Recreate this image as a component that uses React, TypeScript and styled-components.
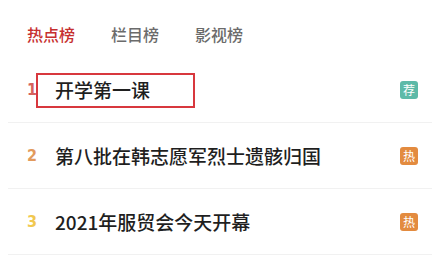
import React from "react";
import styled, { createGlobalStyle } from "styled-components";

const Global = createGlobalStyle`
  html, body { margin: 0; padding: 0; background: #ffffff; }
  body { font-family: "Noto Sans CJK SC", "Noto Sans", sans-serif; }
`;

const Page = styled.div`
  width: 447px;
  height: 260px;
  background: #fff;
  overflow: hidden;
`;

const Tabs = styled.div`
  display: flex;
  gap: 36px;
  height: 57px;
  box-sizing: border-box;
  padding: 24px 0 0 27px;
`;

const Tab = styled.div<{ $active?: boolean }>`
  font-size: 16px;
  line-height: 20px;
  font-weight: 500;
  color: ${(p) => (p.$active ? "#c62f2f" : "#6b6b6b")};
`;

const List = styled.div`
  margin-left: 8px;
  width: 424px;
`;

const Row = styled.div`
  position: relative;
  display: flex;
  align-items: center;
  height: 65px;
  border-bottom: 1px solid #f1f1f1;
  padding: 0 14px 0 19px;
`;

const Rank = styled.span<{ $color: string }>`
  width: 28px;
  font-family: "Liberation Sans Narrow", "DejaVu Sans Condensed", sans-serif;
  font-weight: 700;
  font-size: 16px;
  color: ${(p) => p.$color};
`;

const Title = styled.span`
  flex: 1;
  font-size: 19px;
  font-weight: 500;
  color: #1f1f1f;
`;

const Badge = styled.span<{ $bg: string }>`
  width: 18px;
  height: 18px;
  border-radius: 3px;
  background: ${(p) => p.$bg};
  color: #fff;
  font-size: 12px;
  line-height: 18px;
  text-align: center;
`;

const Highlight = styled.div`
  position: absolute;
  left: 28px;
  top: 16px;
  width: 159px;
  height: 35px;
  box-sizing: border-box;
  border: 2px solid #d8383e;
  pointer-events: none;
`;

const items = [
  { rank: 1, color: "#d6625c", title: "开学第一课", badge: "荐", bg: "#5dbaa8", mark: true },
  { rank: 2, color: "#e29a5c", title: "第八批在韩志愿军烈士遗骸归国", badge: "热", bg: "#e38b3f" },
  { rank: 3, color: "#f1c84f", title: "2021年服贸会今天开幕", badge: "热", bg: "#e38b3f" },
];

export default function App() {
  return (
    <Page>
      <Global />
      <Tabs>
        <Tab $active>热点榜</Tab>
        <Tab>栏目榜</Tab>
        <Tab>影视榜</Tab>
      </Tabs>
      <List>
        {items.map((it) => (
          <Row key={it.rank}>
            <Rank $color={it.color}>{it.rank}</Rank>
            <Title>{it.title}</Title>
            <Badge $bg={it.bg}>{it.badge}</Badge>
            {it.mark && <Highlight />}
          </Row>
        ))}
      </List>
    </Page>
  );
}
